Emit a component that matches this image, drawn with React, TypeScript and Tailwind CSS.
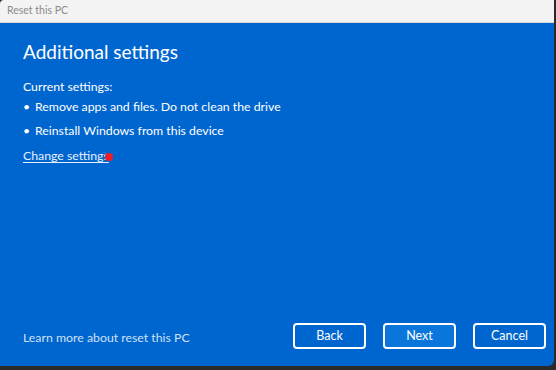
import React from 'react';

const font = { fontFamily: 'Lato, "Noto Sans", sans-serif' };

const App: React.FC = () => {
  const buttons = ['Back', 'Next', 'Cancel'];

  return (
    <div className="w-[556px] h-[370px] bg-[#2a2a2a] overflow-hidden" style={font}>
      <div className="w-[554px] h-[366px] flex flex-col rounded-tl-[4px] rounded-br-[6px] overflow-hidden">
        <div className="h-[23px] shrink-0 bg-[#f3f3f3] border-b border-[#d6d6d6] flex items-center px-[7px]">
          <span className="text-[10.5px] text-[#8a8a8a]">Reset this PC</span>
        </div>

        <div className="flex-1 bg-[#0066cf] text-white pl-[23px] pr-[8px] flex flex-col justify-between pb-[17px]">
          <div>
            <h1 className="text-[19px] leading-[26px] mt-[16px] font-normal">Additional settings</h1>
            <p className="text-[12.3px] mt-[12px] leading-[20px]">Current settings:</p>
            <ul className="text-[12.3px] leading-[20px]">
              <li className="flex gap-[6px]">
                <span className="w-[6px] text-center">•</span>
                <span>Remove apps and files. Do not clean the drive</span>
              </li>
              <li className="flex gap-[6px] mt-[4px]">
                <span className="w-[6px] text-center">•</span>
                <span>Reinstall Windows from this device</span>
              </li>
            </ul>
            <div className="mt-[5px] flex">
              <span className="relative text-[12.3px] leading-[20px] underline underline-offset-2 text-[#e6f0fb]">
                Change settings
                <span className="absolute right-[-4px] top-[7px] w-[8px] h-[8px] rounded-full bg-[#ee1c24]" />
              </span>
            </div>
          </div>

          <div className="flex items-center justify-between">
            <span className="text-[12.3px] text-[#cfe1f6] mt-[5px]">Learn more about reset this PC</span>
            <div className="flex gap-[17px]">
              {buttons.map((b) => (
                <button
                  key={b}
                  className={`w-[73px] h-[26px] rounded-[4px] border-2 border-white text-[12.5px] text-white ${
                    b === 'Next' ? 'bg-[#0a76db]' : 'bg-[#0066cf]'
                  }`}
                >
                  {b}
                </button>
              ))}
            </div>
          </div>
        </div>
      </div>
    </div>
  );
};

export default App;
